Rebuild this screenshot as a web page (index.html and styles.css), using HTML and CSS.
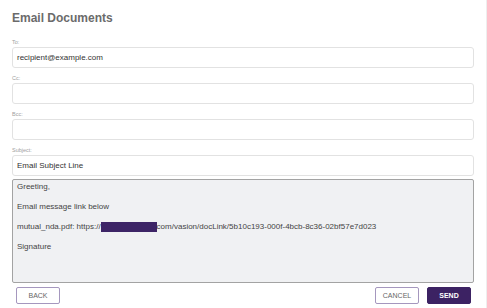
FILE: index.html
```html
<!DOCTYPE html>
<html lang="en">
<head>
    <meta charset="UTF-8">
    <meta name="viewport" content="width=device-width, initial-scale=1.0">
    <title>Email Documents</title>
    <link rel="stylesheet" href="styles.css">
</head>
<body>
    <div class="dialog">
        <h1>Email Documents</h1>
        <div class="field">
            <label>To:</label>
            <div class="input">recipient@example.com</div>
        </div>
        <div class="field">
            <label>Cc:</label>
            <div class="input"></div>
        </div>
        <div class="field">
            <label>Bcc:</label>
            <div class="input"></div>
        </div>
        <div class="field">
            <label>Subject:</label>
            <div class="input">Email Subject Line</div>
        </div>
        <div class="message">
            <p>Greeting,</p>
            <p>Email message link below</p>
            <p>mutual_nda.pdf: https://<span class="redacted"></span>com/vasion/docLink/5b10c193-000f-4bcb-8c36-02bf57e7d023</p>
            <p>Signature</p>
        </div>
        <div class="actions">
            <button class="btn">BACK</button>
            <div class="right">
                <button class="btn">CANCEL</button>
                <button class="btn primary">SEND</button>
            </div>
        </div>
    </div>
</body>
</html>
```

FILE: styles.css
```css
body {
    margin: 0;
    background-color: white;
    font-family: 'Liberation Sans', Arial, sans-serif;
}
.dialog {
    height: 308px;
    box-sizing: border-box;
    padding: 11px 12px 0 12px;
    border-right: 1px solid #eeeeee;
}
h1 {
    margin: 0 0 12px 0;
    font-size: 12px;
    line-height: 15px;
    font-weight: bold;
    color: #6b6b6b;
}
.field {
    margin-bottom: 6px;
}
.field label {
    display: block;
    font-size: 5.5px;
    line-height: 9px;
    color: #a0a0a0;
}
.input {
    height: 21px;
    box-sizing: border-box;
    border: 1px solid #e2e2e2;
    border-radius: 3px;
    padding: 0 4px;
    font-size: 8px;
    line-height: 19px;
    color: #333;
}
.message {
    margin-top: -3px;
    height: 104px;
    box-sizing: border-box;
    background-color: #f0f1f3;
    border: 1px solid #a3a3a3;
    border-radius: 2px;
    padding: 2px 4px;
    font-size: 8px;
    line-height: 10px;
    color: #444;
}
.message p {
    margin: 0 0 10px 0;
}
.redacted {
    display: inline-block;
    width: 56px;
    height: 10px;
    vertical-align: top;
    background-color: #3d2466;
}
.actions {
    display: flex;
    justify-content: space-between;
    margin-top: 4px;
    padding: 0 3px 0 4px;
}
.right {
    display: flex;
    gap: 8px;
}
.btn {
    width: 44px;
    height: 17px;
    padding: 0;
    border: 1px solid #a597be;
    border-radius: 2px;
    background-color: white;
    color: #666;
    font-family: 'Liberation Sans', Arial, sans-serif;
    font-size: 7px;
}
.btn.primary {
    background-color: #3c2263;
    border-color: #3c2263;
    color: white;
    font-weight: bold;
}
```
